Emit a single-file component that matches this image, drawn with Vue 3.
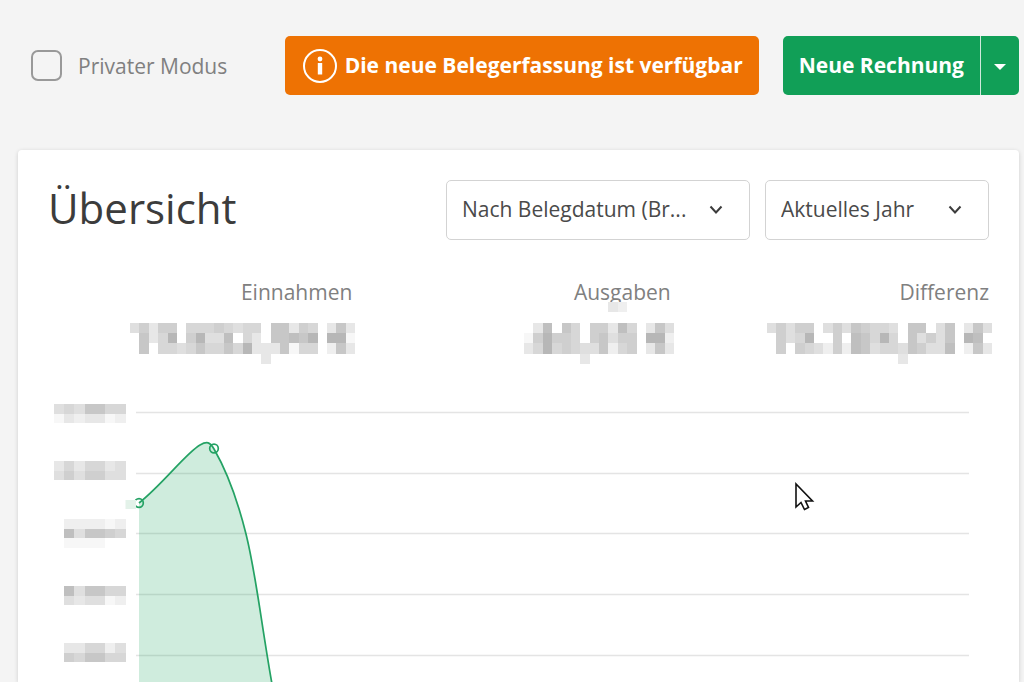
<script setup>
import { ref } from 'vue'

const privateMode = ref(false)
const basis = ref('Nach Belegdatum (Br...')
const period = ref('Aktuelles Jahr')

// Masked amounts: one digit per tile, 0 is empty and 9 is the darkest grey.
const stats = [
  {
    label: 'Einnahmen',
    cols: 24,
    rows: [
      '',
      '',
      '463660555654550773650373',
      '073590694480530778790991',
      '070554575575933371550273',
      '000000000000003'
    ]
  },
  {
    label: 'Ausgaben',
    cols: 16,
    rows: [
      '0000000003200000',
      '',
      '0380750663850374',
      '1696650674660992',
      '3595654472560373',
      '0000003'
    ]
  },
  {
    label: 'Differenz',
    cols: 24,
    rows: [
      '',
      '',
      '464660464765540770470374',
      '064590060875950746470980',
      '060654262874554764480273',
      '000000000000003'
    ]
  }
]

const axis = [
  { y: 22, rows: ['4547755', '1323312'] },
  { y: 79, rows: ['3535534', '4646644'] },
  { y: 137, rows: ['0222212', '0847765', '0111100'] },
  { y: 204, rows: ['0847755', '0434412'] },
  { y: 261, rows: ['0335524', '0657755'] }
]

const gridLines = [30, 91, 151, 212, 273]

function tiles(rows) {
  return rows.flatMap((row, y) =>
    [...row].map((c, x) => ({ x, y, level: Number(c) })).filter((t) => t.level > 0)
  )
}

function grey(level) {
  const v = 255 - level * 8
  return `rgb(${v}, ${v}, ${v})`
}
</script>

<template>
  <div class="page">
    <header class="toolbar">
      <label class="private">
        <input v-model="privateMode" type="checkbox" />
        <span>Privater Modus</span>
      </label>
      <button class="notice" type="button">
        <svg class="info" viewBox="0 0 36 36" aria-hidden="true">
          <circle cx="18" cy="18" r="16" fill="none" stroke="currentColor" stroke-width="2" />
          <circle cx="18" cy="11" r="2.4" fill="currentColor" />
          <path d="M18 15V26.5" stroke="currentColor" stroke-width="4.4" />
        </svg>
        <span class="text">Die neue Belegerfassung ist verfügbar</span>
      </button>
      <div class="split">
        <button class="main" type="button">Neue Rechnung</button>
        <button class="more" type="button" aria-haspopup="menu" aria-label="Neue Rechnung">
          <svg viewBox="0 0 12 6" aria-hidden="true"><path d="M0 0H12L6 6Z" fill="currentColor" /></svg>
        </button>
      </div>
    </header>

    <main class="card">
      <div class="head">
        <h1>Übersicht</h1>
        <div class="select basis">
          <select v-model="basis">
            <option>Nach Belegdatum (Br...</option>
          </select>
          <svg viewBox="0 0 14 10" aria-hidden="true"><path d="M1.5 1.5L7 7.5L12.5 1.5" /></svg>
        </div>
        <div class="select period">
          <select v-model="period">
            <option>Aktuelles Jahr</option>
          </select>
          <svg viewBox="0 0 14 10" aria-hidden="true"><path d="M1.5 1.5L7 7.5L12.5 1.5" /></svg>
        </div>
      </div>

      <section class="stats">
        <div v-for="s in stats" :key="s.label" class="stat">
          <span class="label">{{ s.label }}</span>
          <svg
            class="mask"
            :class="{ short: s.cols === 16 }"
            :viewBox="`0 0 ${s.cols} 6`"
            preserveAspectRatio="none"
            shape-rendering="crispEdges"
            aria-hidden="true"
          >
            <rect
              v-for="t in tiles(s.rows)"
              :key="`${t.x}-${t.y}`"
              :x="t.x"
              :y="t.y"
              width="1"
              height="1"
              :fill="grey(t.level)"
            />
          </svg>
        </div>
      </section>

      <svg class="chart" viewBox="0 0 1001 300" aria-hidden="true">
        <path v-for="y in gridLines" :key="y" class="grid" :d="`M118 ${y + 0.5}H951`" />
        <path
          class="area"
          d="M121 121C145 102 168 71 182 63C189 59 192 60 196 67C207 86 219 116 228 152C238 192 243 240 254 302H121Z"
        />
        <path
          class="line"
          d="M121 121C145 102 168 71 182 63C189 59 192 60 196 67C207 86 219 116 228 152C238 192 243 240 254 302"
        />
        <circle class="dot" cx="121" cy="121" r="4.3" />
        <circle class="dot" cx="196" cy="66.5" r="4.3" />
        <rect x="107.5" y="118" width="10.5" height="9" fill="#e3f2e9" />
        <g
          v-for="a in axis"
          :key="a.y"
          :transform="`translate(36 ${a.y}) scale(10.23 9.6)`"
          shape-rendering="crispEdges"
        >
          <rect
            v-for="t in tiles(a.rows)"
            :key="`${t.x}-${t.y}`"
            :x="t.x"
            :y="t.y"
            width="1"
            height="1"
            :fill="grey(t.level)"
          />
        </g>
      </svg>
    </main>

    <svg class="pointer" viewBox="0 0 22 30" aria-hidden="true">
      <path d="M2 2V25L7 20.5L10.5 27.5L14.5 25.5L11.5 19H18.5Z" />
    </svg>
  </div>
</template>

<style>
body {
  background: #f4f4f4;
}
</style>

<style scoped>
.page {
  position: relative;
  min-height: 100vh;
  box-sizing: border-box;
  padding: 36px 5px 0 18px;
  overflow: hidden;
  background: #f4f4f4;
  color: #3c3c3c;
  font-family: 'Open Sans', 'Noto Sans', sans-serif;
  font-size: 21px;
}

button,
select {
  font: inherit;
}

.toolbar {
  display: flex;
  align-items: center;
  margin-bottom: 55px;
}

.private {
  display: flex;
  align-items: center;
  gap: 16px;
  margin: 0 auto 0 13px;
  color: #808080;
}

.private input {
  appearance: none;
  width: 31px;
  height: 31px;
  margin: 0;
  border: 2px solid #999;
  border-radius: 7px;
}

.notice,
.main,
.more {
  height: 59px;
  border: 0;
  color: #fff;
  font-weight: 700;
}

.notice {
  display: flex;
  align-items: center;
  gap: 7px;
  margin-right: 24px;
  padding: 0 16px 0 17px;
  border-radius: 5px;
  background: #ee7203;
}

.info {
  width: 36px;
  height: 36px;
}

.text {
  padding-bottom: 2px;
}

.split {
  display: flex;
  gap: 1px;
  border-radius: 5px;
  overflow: hidden;
  background: #cfe9db;
}

.main,
.more {
  background: #119f57;
}

.main {
  padding: 0 16px 2px;
}

.more {
  display: flex;
  align-items: center;
  justify-content: center;
  width: 38px;
  padding: 3px 0 0;
}

.more svg {
  width: 12px;
  height: 6px;
}

.card {
  border-radius: 4px 4px 0 0;
  background: #fff;
  box-shadow: 0 1px 4px rgba(0, 0, 0, 0.16);
}

.head {
  display: flex;
  align-items: center;
  gap: 15px;
  padding: 30px 30px 0;
}

h1 {
  margin: 0 auto 4px 0;
  font-size: 42px;
  line-height: 56px;
  font-weight: 400;
}

.select {
  position: relative;
}

.select select {
  appearance: none;
  width: 100%;
  height: 60px;
  padding: 0 48px 2px 15px;
  border: 1px solid #d3d3d3;
  border-radius: 5px;
  background: #fff;
  color: #4a4a4a;
}

.select svg {
  position: absolute;
  top: 25px;
  right: 27px;
  width: 14px;
  height: 10px;
  fill: none;
  stroke: #3c3c3c;
  stroke-width: 2;
  pointer-events: none;
}

.basis {
  width: 304px;
}

.period {
  width: 224px;
}

.stats {
  display: grid;
  grid-template-columns: repeat(3, 1fr);
  padding: 43px 27px 0 19px;
}

.stat {
  display: flex;
  flex-direction: column;
  align-items: flex-end;
}

.label {
  padding-right: 3px;
  color: #808080;
  line-height: 19px;
}

.mask {
  width: 225px;
  height: 62px;
}

.mask.short {
  width: 150px;
}

.chart {
  display: block;
  width: 100%;
  margin-top: 18px;
}

.grid {
  stroke: #e4e4e4;
  stroke-width: 1.4;
}

.area {
  fill: rgba(17, 159, 87, 0.2);
}

.line,
.dot {
  fill: none;
  stroke: #24a264;
  stroke-width: 1.7;
}

.pointer {
  position: absolute;
  top: 482px;
  left: 794px;
  width: 22px;
  height: 30px;
  fill: #fff;
  stroke: #111;
  stroke-width: 1.6;
}
</style>
